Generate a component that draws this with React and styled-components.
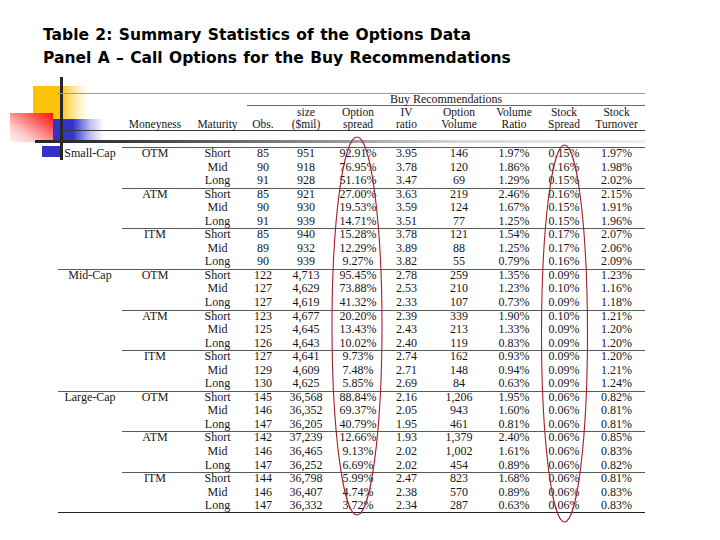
import React from 'react'
import styled, { createGlobalStyle } from 'styled-components'

// rows: [cap, moneyness, maturity, obs, size, optSpread, ivRatio, optVolume, volRatio, stockSpread, turnover]
const rows = [
    ['Small-Cap', 'OTM', 'Short', '85', '951', '92.91%', '3.95', '146', '1.97%', '0.15%', '1.97%'],
    ['', '', 'Mid', '90', '918', '76.95%', '3.78', '120', '1.86%', '0.16%', '1.98%'],
    ['', '', 'Long', '91', '928', '51.16%', '3.47', '69', '1.29%', '0.15%', '2.02%'],
    ['', 'ATM', 'Short', '85', '921', '27.00%', '3.63', '219', '2.46%', '0.16%', '2.15%'],
    ['', '', 'Mid', '90', '930', '19.53%', '3.59', '124', '1.67%', '0.15%', '1.91%'],
    ['', '', 'Long', '91', '939', '14.71%', '3.51', '77', '1.25%', '0.15%', '1.96%'],
    ['', 'ITM', 'Short', '85', '940', '15.28%', '3.78', '121', '1.54%', '0.17%', '2.07%'],
    ['', '', 'Mid', '89', '932', '12.29%', '3.89', '88', '1.25%', '0.17%', '2.06%'],
    ['', '', 'Long', '90', '939', '9.27%', '3.82', '55', '0.79%', '0.16%', '2.09%'],
    ['Mid-Cap', 'OTM', 'Short', '122', '4,713', '95.45%', '2.78', '259', '1.35%', '0.09%', '1.23%'],
    ['', '', 'Mid', '127', '4,629', '73.88%', '2.53', '210', '1.23%', '0.10%', '1.16%'],
    ['', '', 'Long', '127', '4,619', '41.32%', '2.33', '107', '0.73%', '0.09%', '1.18%'],
    ['', 'ATM', 'Short', '123', '4,677', '20.20%', '2.39', '339', '1.90%', '0.10%', '1.21%'],
    ['', '', 'Mid', '125', '4,645', '13.43%', '2.43', '213', '1.33%', '0.09%', '1.20%'],
    ['', '', 'Long', '126', '4,643', '10.02%', '2.40', '119', '0.83%', '0.09%', '1.20%'],
    ['', 'ITM', 'Short', '127', '4,641', '9.73%', '2.74', '162', '0.93%', '0.09%', '1.20%'],
    ['', '', 'Mid', '129', '4,609', '7.48%', '2.71', '148', '0.94%', '0.09%', '1.21%'],
    ['', '', 'Long', '130', '4,625', '5.85%', '2.69', '84', '0.63%', '0.09%', '1.24%'],
    ['Large-Cap', 'OTM', 'Short', '145', '36,568', '88.84%', '2.16', '1,206', '1.95%', '0.06%', '0.82%'],
    ['', '', 'Mid', '146', '36,352', '69.37%', '2.05', '943', '1.60%', '0.06%', '0.81%'],
    ['', '', 'Long', '147', '36,205', '40.79%', '1.95', '461', '0.81%', '0.06%', '0.81%'],
    ['', 'ATM', 'Short', '142', '37,239', '12.66%', '1.93', '1,379', '2.40%', '0.06%', '0.85%'],
    ['', '', 'Mid', '146', '36,465', '9.13%', '2.02', '1,002', '1.61%', '0.06%', '0.83%'],
    ['', '', 'Long', '147', '36,252', '6.69%', '2.02', '454', '0.89%', '0.06%', '0.82%'],
    ['', 'ITM', 'Short', '144', '36,798', '5.99%', '2.47', '823', '1.68%', '0.06%', '0.81%'],
    ['', '', 'Mid', '146', '36,407', '4.74%', '2.38', '570', '0.89%', '0.06%', '0.83%'],
    ['', '', 'Long', '147', '36,332', '3.72%', '2.34', '287', '0.63%', '0.06%', '0.83%'],
]

const widths = [64, 66, 59, 32, 54, 50, 47, 58, 52, 48, 57]

const heads = [
    ['', ''], ['', 'Moneyness'], ['', 'Maturity'], ['', 'Obs.'], ['size', '($mil)'],
    ['Option', 'spread'], ['IV', 'ratio'], ['Option', 'Volume'], ['Volume', 'Ratio'],
    ['Stock', 'Spread'], ['Stock', 'Turnover'],
]

const App = () => (
    <>
        <GlobalStyle />
        <Slide>
            <Ornament>
                <YellowTile />
                <BlueTile />
                <BlueFoot />
                <RedTile />
                <Post />
            </Ornament>
            <FadeBar />
            <Content>
                <Heading>
                    Table 2: Summary Statistics of the Options Data<br />
                    Panel A – Call Options for the Buy Recommendations
                </Heading>
                <Table>
                    <colgroup>
                        { widths.map((w, i) => <col key={ i } style={{ width: w }} />) }
                    </colgroup>
                    <tbody>
                        <tr>
                            <SpanCell colSpan={ 3 } $top />
                            <SpanCell colSpan={ 8 } $top $under>Buy Recommendations</SpanCell>
                        </tr>
                        <tr>
                            { heads.map((h, i) => (
                                <HeadCell key={ i }>
                                    { h[0] && <HeadLine>{ h[0] }</HeadLine> }
                                    <HeadLine>{ h[1] }</HeadLine>
                                </HeadCell>
                            )) }
                        </tr>
                        <tr><GapCell colSpan={ 11 } /></tr>
                        { rows.map((r, ri) => {
                            const capStart = ri > 0 && ri % 9 === 0
                            const groupStart = ri % 3 === 0
                            return (
                                <tr key={ ri }>
                                    { r.map((v, ci) => (
                                        <Cell
                                            key={ ci }
                                            $rule={ capStart || (groupStart && ci > 0) }
                                            $last={ ri === rows.length - 1 }
                                        >
                                            { v }
                                        </Cell>
                                    )) }
                                </tr>
                            )
                        }) }
                    </tbody>
                </Table>
            </Content>
            <Marks viewBox="0 0 720 540">
                <ellipse cx="357" cy="326" rx="25" ry="189" />
                <ellipse cx="564.5" cy="333.5" rx="23" ry="188.5" />
            </Marks>
        </Slide>
    </>
)

const GlobalStyle = createGlobalStyle`
    html, body {
        margin: 0;
        padding: 0;
        background: #fff;
    }
`

const Slide = styled.div`
    position: relative;
    width: 720px;
    height: 540px;
    overflow: hidden;
    background: #fff;
`

// slide-master ornament, top-left
const Ornament = styled.div`
    position: absolute;
    left: 0;
    top: 0;
    width: 110px;
    height: 170px;
    z-index: 0;
    div { position: absolute; }
`

const YellowTile = styled.div`
    left: 33px;
    top: 86px;
    width: 56px;
    height: 34px;
    background: linear-gradient(to right, #ffc20a 0%, #ffc20a 48%, rgba(255, 204, 40, 0.35) 78%, rgba(255, 220, 80, 0) 100%);
`

const BlueTile = styled.div`
    left: 42px;
    top: 119px;
    width: 62px;
    height: 22px;
    background: linear-gradient(to right, #3232c8 0%, #3434cc 50%, rgba(70, 70, 210, 0.35) 78%, rgba(90, 90, 220, 0) 100%);
`

const BlueFoot = styled.div`
    left: 42px;
    top: 146px;
    width: 20px;
    height: 11px;
    background: #3232c8;
`

const RedTile = styled.div`
    left: 10px;
    top: 113px;
    width: 43px;
    height: 29px;
    background: linear-gradient(to bottom left, #ff1010 0%, #ff5a5a 30%, #ffc8c8 70%, #fff4f4 100%);
`

const Post = styled.div`
    left: 60px;
    top: 77px;
    width: 3px;
    height: 83px;
    background: #262626;
`

const FadeBar = styled.div`
    position: absolute;
    left: 35px;
    top: 140px;
    width: 610px;
    height: 3px;
    z-index: 0;
    background: linear-gradient(to right, #252525 0%, #3a3a3a 15%, #8a8a8a 45%, #d8d8d8 70%, #eeeeee 100%);
`

const Content = styled.div`
    position: relative;
    z-index: 1;
`

const Heading = styled.h1`
    margin: 0;
    padding: 24px 0 0 43px;
    font-family: "DejaVu Sans", Verdana, sans-serif;
    font-size: 15.5px;
    font-weight: bold;
    line-height: 23px;
    word-spacing: 1px;
    color: #000;
`

const Table = styled.table`
    margin: 23px 0 0 58px;
    width: 587px;
    table-layout: fixed;
    border-collapse: separate;
    border-spacing: 0;
    font-family: "Liberation Serif", "Times New Roman", serif;
    font-size: 12px;
    color: #161616;
`

const SpanCell = styled.td`
    padding: 0;
    height: 13px;
    line-height: 13px;
    text-align: center;
    box-shadow: ${ p => [
        p.$top && 'inset 0 1px 0 #9a9a9a',
        p.$under && 'inset 0 -1px 0 #6a6a6a',
    ].filter(Boolean).join(', ') || 'none' };
`

const HeadCell = styled.td`
    padding: 0 0 1px;
    height: 23px;
    text-align: center;
    vertical-align: bottom;
    white-space: nowrap;
    box-shadow: inset 0 -1px 0 #3a3a3a;
`

const HeadLine = styled.div`
    height: 12px;
    font-size: 11.5px;
    line-height: 12px;
`

const GapCell = styled.td`
    padding: 0;
    height: 16px;
`

const Cell = styled.td`
    padding: 0;
    height: 13.55px;
    line-height: 13.55px;
    text-align: center;
    white-space: nowrap;
    box-shadow: ${ p => [
        p.$rule && 'inset 0 1px 0 #5a5a5a',
        p.$last && 'inset 0 -1px 0 #222',
    ].filter(Boolean).join(', ') || 'none' };
`

const Marks = styled.svg`
    position: absolute;
    left: 0;
    top: 0;
    width: 720px;
    height: 540px;
    z-index: 2;
    pointer-events: none;
    ellipse {
        fill: none;
        stroke: #a81c2c;
        stroke-width: 1.1;
    }
`

export default App
